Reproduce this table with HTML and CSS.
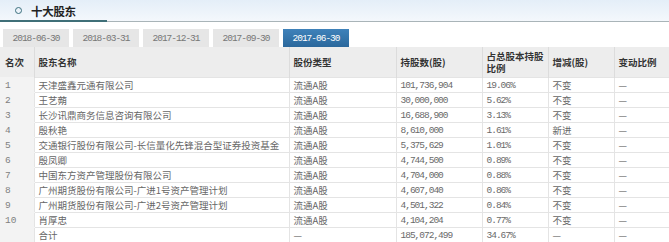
FILE: index.html
```html
<!DOCTYPE html>
<html>
<head>
<meta charset="utf-8">
<link rel="stylesheet" href="styles.css">
</head>
<body>
<div class="panel">
  <div class="titlebar">
    <span class="dot"></span>
    <span class="title">十大股东</span>
  </div>
  <div class="rule"><span class="rule-accent"></span></div>
  <div class="tabs">
    <span class="tab">2018-06-30</span>
    <span class="tab">2018-03-31</span>
    <span class="tab">2017-12-31</span>
    <span class="tab">2017-09-30</span>
    <span class="tab active">2017-06-30</span>
  </div>
  <table class="grid">
    <colgroup>
      <col class="c1"><col class="c2"><col class="c3"><col class="c4"><col class="c5"><col class="c6"><col class="c7">
    </colgroup>
    <thead>
      <tr>
        <th class="rank">名次</th>
        <th>股东名称</th>
        <th>股份类型</th>
        <th>持股数(股)</th>
        <th>占总股本持股比例</th>
        <th>增减(股)</th>
        <th>变动比例</th>
      </tr>
    </thead>
    <tbody>
      <tr><td class="rank">1</td><td>天津盛鑫元通有限公司</td><td>流通A股</td><td class="num">101,736,904</td><td class="num">19.06%</td><td>不变</td><td>—</td></tr>
      <tr><td class="rank">2</td><td>王艺蒴</td><td>流通A股</td><td class="num">30,000,000</td><td class="num">5.62%</td><td>不变</td><td>—</td></tr>
      <tr><td class="rank">3</td><td>长沙讯鼎商务信息咨询有限公司</td><td>流通A股</td><td class="num">16,688,900</td><td class="num">3.13%</td><td>不变</td><td>—</td></tr>
      <tr><td class="rank">4</td><td>殷秋艳</td><td>流通A股</td><td class="num">8,610,000</td><td class="num">1.61%</td><td>新进</td><td>—</td></tr>
      <tr><td class="rank">5</td><td>交通银行股份有限公司-长信量化先锋混合型证券投资基金</td><td>流通A股</td><td class="num">5,375,629</td><td class="num">1.01%</td><td>不变</td><td>—</td></tr>
      <tr><td class="rank">6</td><td>殷凤卿</td><td>流通A股</td><td class="num">4,744,500</td><td class="num">0.89%</td><td>不变</td><td>—</td></tr>
      <tr><td class="rank">7</td><td>中国东方资产管理股份有限公司</td><td>流通A股</td><td class="num">4,704,000</td><td class="num">0.88%</td><td>不变</td><td>—</td></tr>
      <tr><td class="rank">8</td><td>广州期货股份有限公司-广进1号资产管理计划</td><td>流通A股</td><td class="num">4,607,040</td><td class="num">0.86%</td><td>不变</td><td>—</td></tr>
      <tr><td class="rank">9</td><td>广州期货股份有限公司-广进2号资产管理计划</td><td>流通A股</td><td class="num">4,501,322</td><td class="num">0.84%</td><td>不变</td><td>—</td></tr>
      <tr><td class="rank">10</td><td>肖厚忠</td><td>流通A股</td><td class="num">4,104,204</td><td class="num">0.77%</td><td>不变</td><td>—</td></tr>
      <tr><td class="rank"></td><td>合计</td><td>—</td><td class="num">185,072,499</td><td class="num">34.67%</td><td>—</td><td>—</td></tr>
    </tbody>
  </table>
</div>
</body>
</html>
```
FILE: styles.css
```css
html, body {
  margin: 0;
  padding: 0;
  background: #ffffff;
}
body {
  width: 669px;
  height: 242px;
  overflow: hidden;
  font-family: "Liberation Mono", "Noto Sans CJK SC", monospace;
  font-size: 9.5px;
  color: #666;
}
.titlebar {
  height: 21px;
  display: flex;
  align-items: center;
  background: linear-gradient(180deg, #e4eef8 0%, #f4f8fc 100%);
}
.dot {
  width: 5px;
  height: 5px;
  border: 1px solid #3b6f7d;
  border-radius: 50%;
  margin-left: 15px;
  margin-right: 9px;
}
.title {
  font-family: "Noto Sans CJK SC", sans-serif;
  font-weight: bold;
  font-size: 11.5px;
  color: #222;
  letter-spacing: -0.3px;
}
.rule {
  height: 1px;
  background: #a9b4b8;
  position: relative;
  margin-bottom: 7px;
}
.rule-accent {
  position: absolute;
  left: 0;
  top: -1px;
  width: 107px;
  height: 2px;
  background: #3f6f78;
}
.tabs {
  display: flex;
  gap: 4px;
  padding-left: 3px;
  height: 18px;
}
.tab {
  width: 66px;
  height: 18px;
  display: flex;
  align-items: center;
  justify-content: center;
  background: #e6e6e6;
  color: #777;
  letter-spacing: -1px;
}
.tab.active {
  background: linear-gradient(180deg, #3f82ba 0%, #2b689c 100%);
  color: #fff;
}
.grid {
  border-collapse: collapse;
  table-layout: fixed;
  width: 669px;
}
.c1 { width: 34px; }
.c2 { width: 255px; }
.c3 { width: 107px; }
.c4 { width: 86px; }
.c5 { width: 66px; }
.c6 { width: 66px; }
.c7 { width: 55px; }
.grid th {
  height: 30px;
  background: #ededed;
  color: #333;
  font-family: "Noto Sans CJK SC", sans-serif;
  font-weight: bold;
  font-size: 9.5px;
  text-align: left;
  padding: 0 4px;
  line-height: 12px;
  border-left: 1px solid #dcdcdc;
  vertical-align: middle;
}
.grid th:first-child {
  border-left: none;
  padding-left: 5px;
}
.grid td {
  height: 14px;
  padding: 0 4px;
  line-height: 13px;
  border: 1px solid #e4e4e4;
  border-right: none;
  white-space: nowrap;
  overflow: hidden;
  font-family: "Noto Sans CJK SC", sans-serif;
}
.grid td.num {
  font-family: "Liberation Mono", monospace;
  letter-spacing: -1px;
  color: #6a6a6a;
}
.grid td.rank {
  background: #f3f3f3;
  border-left: none;
  border-color: #f3f3f3 #ffffff #f3f3f3 #f3f3f3;
  font-family: "Liberation Mono", monospace;
  padding-left: 5px;
  color: #808080;
}
```
